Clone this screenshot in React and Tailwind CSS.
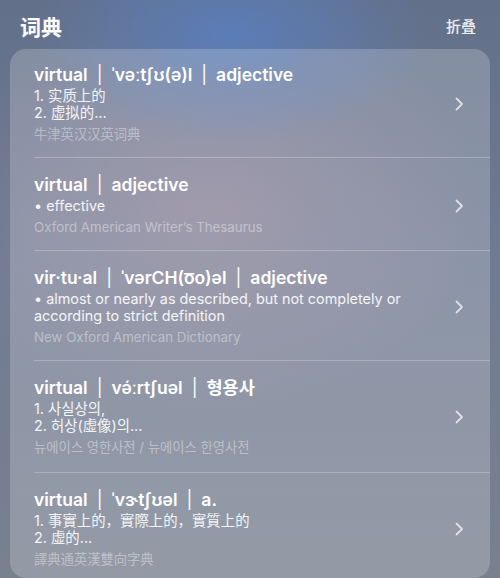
import React from 'react';

const entries = [
  {
    title: 'virtual | ˈvəːtʃʊ(ə)l | adjective',
    lines: ['1. 实质上的', '2. 虚拟的...'],
    source: '牛津英汉汉英词典',
    pt: 'pt-[15px]',
    pb: 'pb-[13px]',
  },
  {
    title: 'virtual | adjective',
    lines: ['• effective'],
    source: 'Oxford American Writer’s Thesaurus',
    pt: 'pt-[16px]',
    pb: 'pb-[13px]',
  },
  {
    title: 'vir·tu·al | ˈvərCH(o͞o)əl | adjective',
    lines: ['• almost or nearly as described, but not completely or according to strict definition'],
    source: 'New Oxford American Dictionary',
    pt: 'pt-[16px]',
    pb: 'pb-[13px]',
  },
  {
    title: 'virtual | və́ːrtʃuəl | 형용사',
    lines: ['1. 사실상의,', '2. 허상(虛像)의...'],
    source: '뉴에이스 영한사전 / 뉴에이스 한영사전',
    pt: 'pt-[16px]',
    pb: 'pb-[15px]',
  },
  {
    title: 'virtual | ˈvɝtʃʊəl | a.',
    lines: ['1. 事實上的，實際上的，實質上的', '2. 虛的...'],
    source: '譯典通英漢雙向字典',
    pt: 'pt-[16px]',
    pb: 'pb-[8px]',
  },
];

function Chevron() {
  return (
    <svg width="10" height="16" viewBox="0 0 10 16" fill="none" className="shrink-0">
      <path d="M2.5 2.5l5.5 5.5-5.5 5.5" stroke="rgba(255,255,255,0.7)" strokeWidth="1.8" strokeLinecap="round" strokeLinejoin="round" />
    </svg>
  );
}

export default function App() {
  return (
    <div
      className="w-[500px] h-[578px] overflow-hidden flex flex-col px-[10px] bg-[radial-gradient(ellipse_40%_20%_at_46%_6%,#5a7db8_0%,rgba(90,125,184,0)_100%),radial-gradient(ellipse_55%_35%_at_42%_36%,rgba(195,150,165,0.32)_0%,rgba(195,150,165,0)_100%),linear-gradient(to_bottom,#637089_0%,#6f7b93_45%,#79818f_100%)]"
      style={{ fontFamily: 'Inter, "Noto Sans CJK SC", "Noto Sans CJK KR", sans-serif' }}
    >
      <div className="flex items-center justify-between h-[49px] pl-[10px] pr-[14px] pt-[6px]">
        <div className="text-white text-[21px] font-bold">词典</div>
        <div className="text-white/90 text-[15px] font-medium">折叠</div>
      </div>
      <div className="flex-1 rounded-[16px] bg-white/20 pl-[24px] overflow-hidden">
        {entries.map((e, i) => (
          <div
            key={i}
            className={`flex items-center pr-[26px] ${e.pt} ${e.pb} ${i < entries.length - 1 ? 'border-b border-white/25' : ''}`}
          >
            <div className="flex-1 min-w-0">
              <div className="text-white text-[17.5px] font-semibold leading-[22px] whitespace-nowrap">
                {e.title.split(' | ').map((part, j) => (
                  <React.Fragment key={j}>
                    {j > 0 && <span className="mx-[9px] font-normal">|</span>}
                    {part}
                  </React.Fragment>
                ))}
              </div>
              <div className="mt-[1px] text-white/90 text-[14.4px] leading-[17px] pr-[30px]">
                {e.lines.map((l, j) => (
                  <div key={j}>{l}</div>
                ))}
              </div>
              <div className="mt-[3px] text-white/40 text-[13.3px] leading-[20px]">{e.source}</div>
            </div>
            <Chevron />
          </div>
        ))}
      </div>
    </div>
  );
}
